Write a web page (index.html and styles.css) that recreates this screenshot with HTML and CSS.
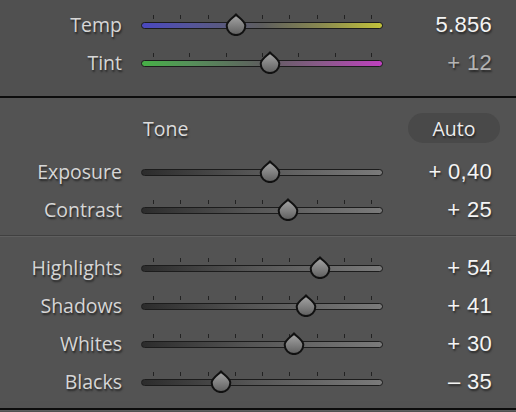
FILE: index.html
```html
<!DOCTYPE html>
<html>
<head>
  <meta charset="UTF-8">
  <title>Basic</title>
  <link rel="stylesheet" href="styles.css">
</head>
<body>
  <svg width="0" height="0" class="defs">
    <defs>
      <linearGradient id="knob" x1="0" y1="0" x2="0" y2="1">
        <stop offset="0" stop-color="#a8a8a8"/>
        <stop offset="1" stop-color="#5e5e5e"/>
      </linearGradient>
      <symbol id="thumb" viewBox="0 0 24 24">
        <path d="M12 2.4 C13.8 5.2 21.3 8.8 21.3 13.8 A9.3 9.3 0 0 1 2.7 13.8 C2.7 8.8 10.2 5.2 12 2.4 Z" fill="url(#knob)" stroke="#111" stroke-width="2" stroke-linejoin="round"/>
      </symbol>
    </defs>
  </svg>

  <div class="panel">
    <div class="section wb">
      <div class="row">
        <span class="label">Temp</span>
        <div class="slider">
          <div class="ticks"><i></i><i></i><i></i><i></i><i></i><i></i><i></i><i></i><i></i></div>
          <div class="track temp">
            <svg class="thumb" style="left: 82px"><use href="#thumb"/></svg>
          </div>
        </div>
        <span class="value">5.856</span>
      </div>
      <div class="row">
        <span class="label">Tint</span>
        <div class="slider">
          <div class="ticks"><i></i><i></i><i></i><i></i><i></i><i></i><i></i></div>
          <div class="track tint">
            <svg class="thumb" style="left: 116px"><use href="#thumb"/></svg>
          </div>
        </div>
        <span class="value dim">+ 12</span>
      </div>
    </div>

    <div class="divider"></div>

    <div class="section tone">
      <div class="tone-head">
        <span class="title">Tone</span>
        <button class="auto">Auto</button>
      </div>
      <div class="row">
        <span class="label">Exposure</span>
        <div class="slider">
          <div class="ticks"></div>
          <div class="track">
            <svg class="thumb" style="left: 116px"><use href="#thumb"/></svg>
          </div>
        </div>
        <span class="value">+ 0,40</span>
      </div>
      <div class="row">
        <span class="label">Contrast</span>
        <div class="slider">
          <div class="ticks"><i></i><i></i><i></i><i></i><i></i><i></i><i></i><i></i><i></i></div>
          <div class="track">
            <svg class="thumb" style="left: 134px"><use href="#thumb"/></svg>
          </div>
        </div>
        <span class="value">+ 25</span>
      </div>

      <div class="rule"></div>

      <div class="row">
        <span class="label">Highlights</span>
        <div class="slider">
          <div class="ticks"><i></i><i></i><i></i><i></i><i></i><i></i><i></i><i></i><i></i></div>
          <div class="track">
            <svg class="thumb" style="left: 166px"><use href="#thumb"/></svg>
          </div>
        </div>
        <span class="value">+ 54</span>
      </div>
      <div class="row">
        <span class="label">Shadows</span>
        <div class="slider">
          <div class="ticks"><i></i><i></i><i></i><i></i><i></i><i></i><i></i><i></i><i></i></div>
          <div class="track">
            <svg class="thumb" style="left: 152px"><use href="#thumb"/></svg>
          </div>
        </div>
        <span class="value">+ 41</span>
      </div>
      <div class="row">
        <span class="label">Whites</span>
        <div class="slider">
          <div class="ticks"><i></i><i></i><i></i><i></i><i></i><i></i><i></i><i></i><i></i></div>
          <div class="track">
            <svg class="thumb" style="left: 140px"><use href="#thumb"/></svg>
          </div>
        </div>
        <span class="value">+ 30</span>
      </div>
      <div class="row">
        <span class="label">Blacks</span>
        <div class="slider">
          <div class="ticks"><i></i><i></i><i></i><i></i><i></i><i></i><i></i><i></i><i></i></div>
          <div class="track">
            <svg class="thumb" style="left: 67px"><use href="#thumb"/></svg>
          </div>
        </div>
        <span class="value">&ndash; 35</span>
      </div>
    </div>

    <div class="divider bottom"></div>
  </div>
</body>
</html>
```

FILE: styles.css
```css
* { box-sizing: border-box; }
html, body {
  margin: 0; padding: 0;
  background: #525252;
  height: 100%;
  overflow: hidden;
}
.defs { position: absolute; }

.panel {
  width: 516px;
  height: 412px;
  display: flex;
  flex-direction: column;
}

.section.wb {
  padding-top: 6px;
  padding-bottom: 14px;
  background: #505050;
}
.section.tone { background: #535353; }

.divider {
  height: 2px;
  background: #0c0c0c;
  box-shadow: 0 1px 0 #5e5e5e;
}
.divider.bottom { margin-top: 7px; }

.rule {
  height: 2px;
  margin: 6px 0 12px;
  border-top: 1px solid #404040;
  border-bottom: 1px solid #5f5f5f;
}

.row {
  display: grid;
  grid-template-columns: 122px 242px 1fr;
  align-items: center;
  height: 38px;
  padding-right: 24px;
}
.label {
  text-align: right;
  font-family: "Open Sans", sans-serif;
  font-size: 19.5px;
  color: #d6d6d6;
  padding-bottom: 2px;
  text-shadow: 1px 2px 2px rgba(0,0,0,0.55);
}
.slider {
  margin-left: 19px;
  width: 242px;
  display: flex;
  flex-direction: column;
  gap: 3px;
  padding-bottom: 7px;
}
.value {
  text-align: right;
  font-family: "Liberation Sans", sans-serif;
  font-size: 22px;
  color: #f4f4f4;
  letter-spacing: 0.3px;
  padding-bottom: 1px;
  text-shadow: 1px 2px 2px rgba(0,0,0,0.5);
}
.value.dim { color: #b4b4b4; }

.ticks {
  height: 4px;
  display: flex;
  justify-content: space-between;
  padding: 0 11px 0 12px;
}
.ticks i {
  width: 1px;
  height: 4px;
  background: #222;
}

.track {
  position: relative;
  height: 7px;
  border: 1.5px solid #1c1c1c;
  border-radius: 4px;
  background: linear-gradient(to right, #2c2c2c, #555 45%, #7a7a7a);
}
.track.temp {
  background: linear-gradient(to right, #4a48c0, #55559a 20%, #5e5e5e 50%, #8a8a50 75%, #c2c23a);
}
.track.tint {
  background: linear-gradient(to right, #46b046, #56905a 20%, #5e5e5e 50%, #8a5a8a 75%, #c040c0);
}
.thumb {
  position: absolute;
  top: -11px;
  width: 24px;
  height: 24px;
}

.tone-head {
  height: 55px;
  display: flex;
  align-items: center;
  justify-content: space-between;
  padding: 5px 16px 0 143px;
}
.title {
  font-family: "Open Sans", sans-serif;
  font-size: 19.5px;
  color: #dcdcdc;
  text-shadow: 1px 2px 2px rgba(0,0,0,0.55);
}
.auto {
  width: 92px;
  height: 30px;
  border: none;
  border-radius: 15px;
  background: #494949;
  color: #ececec;
  font-family: "Open Sans", sans-serif;
  font-size: 19.5px;
  padding: 0;
  text-shadow: 1px 2px 2px rgba(0,0,0,0.55);
}
```
